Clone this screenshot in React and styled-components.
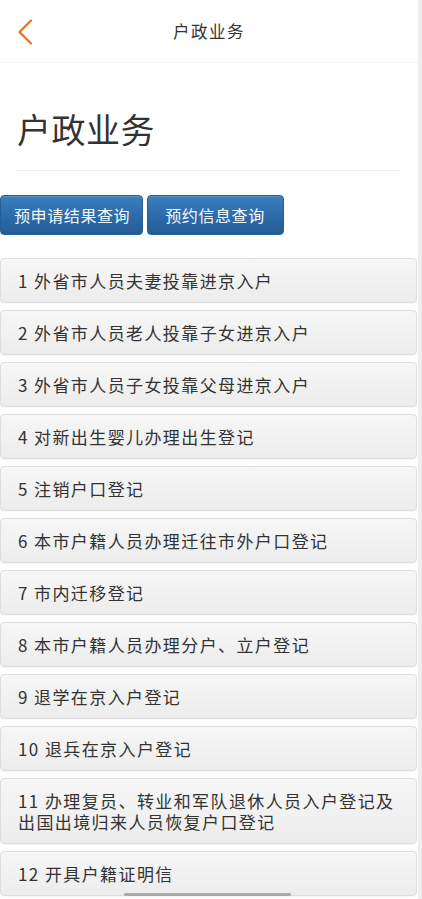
import React from 'react'
import styled, { createGlobalStyle } from 'styled-components'

const GlobalStyle = createGlobalStyle`
  html, body {
    margin: 0;
    padding: 0;
    background: #ffffff;
  }
  body {
    font-family: "Noto Sans CJK SC", "Noto Sans", sans-serif;
    color: #333;
  }
`;

const services = [
  '1 外省市人员夫妻投靠进京入户',
  '2 外省市人员老人投靠子女进京入户',
  '3 外省市人员子女投靠父母进京入户',
  '4 对新出生婴儿办理出生登记',
  '5 注销户口登记',
  '6 本市户籍人员办理迁往市外户口登记',
  '7 市内迁移登记',
  '8 本市户籍人员办理分户、立户登记',
  '9 退学在京入户登记',
  '10 退兵在京入户登记',
  '11 办理复员、转业和军队退休人员入户登记及出国出境归来人员恢复户口登记',
  '12 开具户籍证明信',
];

const App = () => {
  return (
    <>
      <GlobalStyle />
      <Screen>
        <Page>
          <Header>
            <BackButton aria-label="返回">
              <svg width="16" height="26" viewBox="0 0 16 26" fill="none">
                <path d="M14 1.5 L2.5 13 L14 24.5" stroke="#e8731e" strokeWidth="2.2" strokeLinecap="round" strokeLinejoin="round" />
              </svg>
            </BackButton>
            <HeaderTitle>户政业务</HeaderTitle>
          </Header>

          <Intro>
            <Heading>户政业务</Heading>
            <Divider />
          </Intro>

          <ButtonRow>
            <QueryButton>预申请结果查询</QueryButton>
            <QueryButton $padLeft={17} $padRight={18}>预约信息查询</QueryButton>
          </ButtonRow>

          <List>
            {services.map((s) => (
              <Item key={s}>{s}</Item>
            ))}
          </List>
        </Page>
        <ScrollTrack />
        <HomeBar />
      </Screen>
    </>
  )
}

const Screen = styled.div`
  display: flex;
  width: 422px;
  height: 899px;
  overflow: hidden;
  position: relative;
`;

const Page = styled.div`
  flex: 1;
  display: flex;
  flex-direction: column;
  min-width: 0;
`;

const ScrollTrack = styled.div`
  width: 4px;
  flex-shrink: 0;
  background: #eeeeee;
`;

const Header = styled.header`
  height: 62px;
  position: relative;
  display: flex;
  align-items: center;
  justify-content: center;
  border-bottom: 1px solid #f2f2f2;
  flex-shrink: 0;
`;

const BackButton = styled.div`
  position: absolute;
  left: 17px;
  top: 19px;
  width: 18px;
  height: 26px;
  display: flex;
  align-items: center;
`;

const HeaderTitle = styled.h1`
  margin: 0;
  font-size: 16.5px;
  font-weight: 400;
  letter-spacing: 1.5px;
  color: #333;
  line-height: 24px;
`;

const Intro = styled.div`
  padding: 46px 18px 0 16px;
`;

const Heading = styled.h2`
  margin: 0 0 0 1px;
  font-size: 34px;
  line-height: 40px;
  font-weight: 400;
  letter-spacing: 0.5px;
  color: #333;
`;

const Divider = styled.div`
  height: 1px;
  background: #ececec;
  margin-top: 21px;
`;

const ButtonRow = styled.div`
  display: flex;
  gap: 4px;
  margin-top: 24px;
`;

const QueryButton = styled.button`
  box-sizing: border-box;
  height: 40px;
  padding: 0 ${(p) => p.$padRight ?? 12}px 0 ${(p) => p.$padLeft ?? 13}px;
  border: 1px solid #245f99;
  border-radius: 4px;
  background: linear-gradient(to bottom, #3b7fbe 0%, #2c6aa8 55%, #255c96 100%);
  color: #f4f8fc;
  font-family: "Noto Sans CJK SC", "Noto Sans", sans-serif;
  font-size: 16px;
  font-weight: 400;
  letter-spacing: 0.6px;
  line-height: 38px;
  white-space: nowrap;
  box-shadow: inset 0 1px 0 rgba(255, 255, 255, 0.15);
`;

const List = styled.div`
  display: flex;
  flex-direction: column;
  gap: 7px;
  margin-top: 23px;
  padding-right: 1px;
`;

const Item = styled.div`
  padding: 11px 16px 11px 17px;
  border: 1px solid #dedede;
  border-radius: 4px;
  background: linear-gradient(to bottom, #f7f7f7 0%, #ececec 100%);
  box-shadow: 0 1px 1px rgba(0, 0, 0, 0.04);
  font-size: 17px;
  letter-spacing: 1.4px;
  line-height: 21px;
  color: #333;
`;

const HomeBar = styled.div`
  position: absolute;
  left: 124px;
  bottom: 3px;
  width: 167px;
  height: 3px;
  border-radius: 2px;
  background: #a9a9a9;
`;

export default App;
